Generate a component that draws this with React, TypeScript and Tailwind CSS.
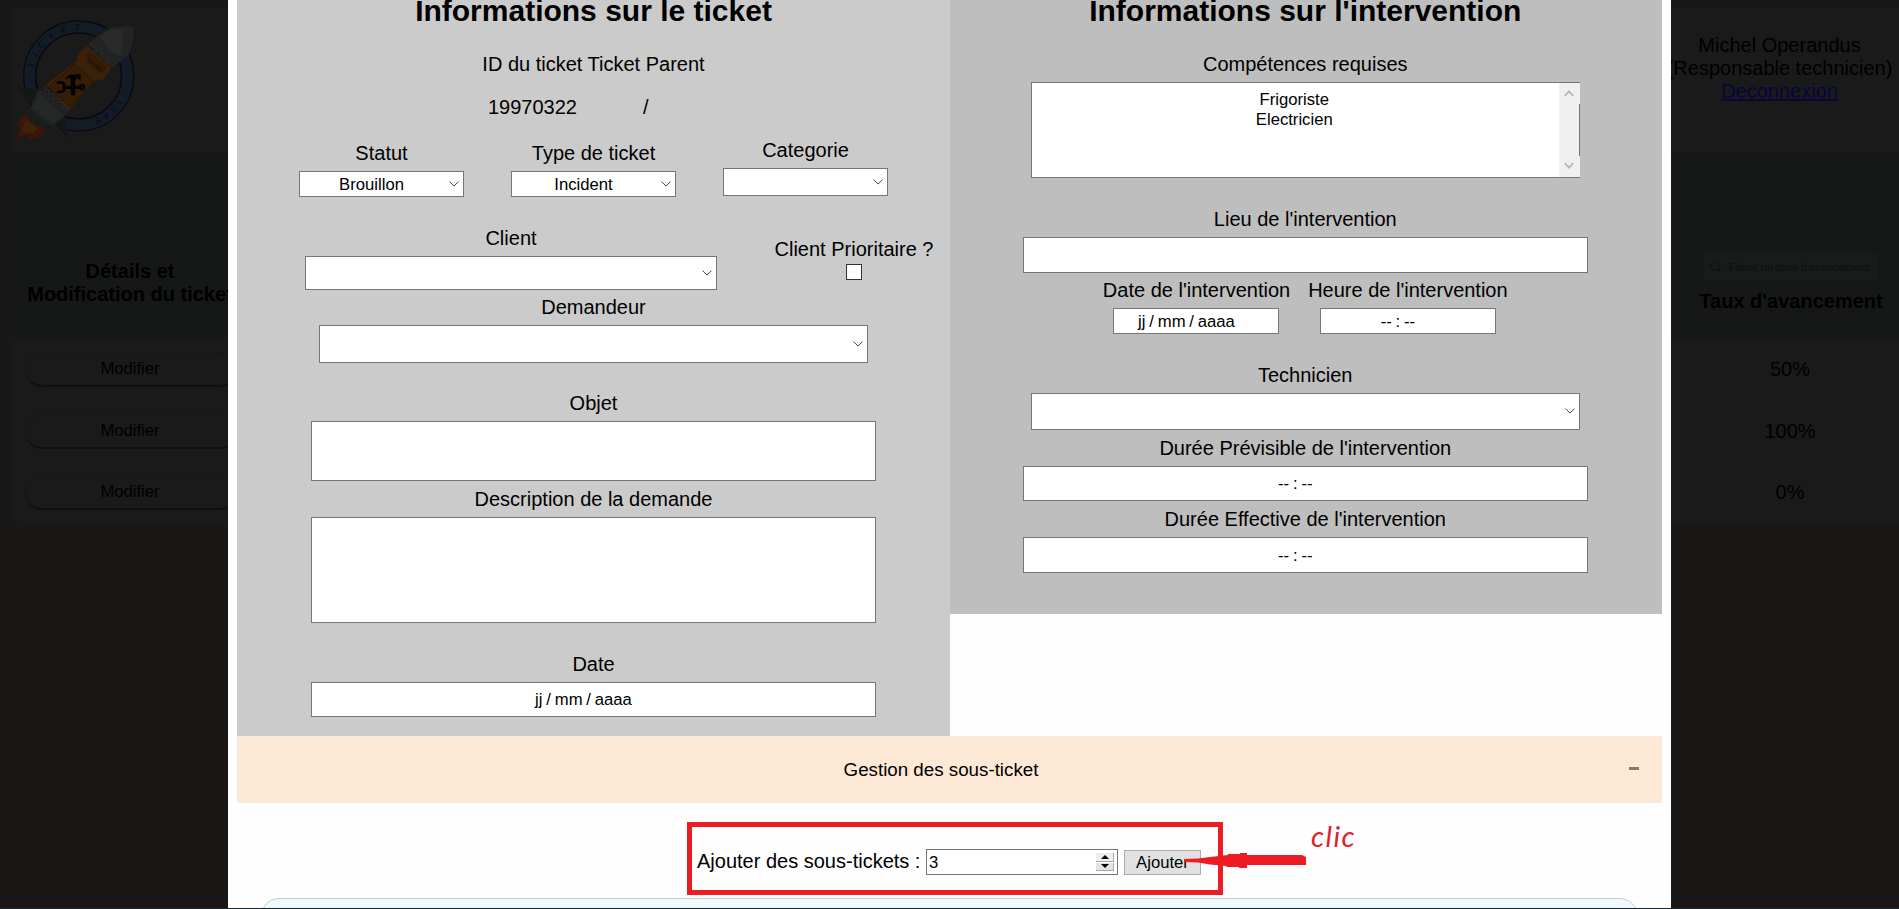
import type { ReactNode } from "react";

function Chevron({ className = "" }: { className?: string }) {
  return (
    <svg viewBox="0 0 10 6" className={"h-[6px] w-[10px] shrink-0 " + className} fill="none" stroke="#444" strokeWidth="1">
      <path d="M0.5 0.6 L5 5.1 L9.5 0.6" />
    </svg>
  );
}

function Label({ children, className = "" }: { children: ReactNode; className?: string }) {
  return <div className={"h-[23px] text-center text-[20px] leading-[23px] whitespace-nowrap " + className}>{children}</div>;
}

function Select({ value = "", className = "" }: { value?: string; className?: string }) {
  return (
    <div className={"mt-[6px] flex items-center border border-[#767676] bg-white pr-[4px] text-[16.667px] " + className}>
      <span className="flex-1 pl-[1px] pr-[7px] text-center">{value}</span>
      <Chevron className="mb-px" />
    </div>
  );
}

function Field({ value = "", className = "" }: { value?: string; className?: string }) {
  return (
    <div className={"mt-[6px] flex items-center justify-center border border-[#767676] bg-white pr-[20px] text-[16.667px] [word-spacing:-0.8px] " + className}>
      {value}
    </div>
  );
}

function Logo() {
  return (
    <svg viewBox="0 0 720 450" className="absolute left-0 top-0 h-[150px] w-[240px]">
      <circle cx="236" cy="228" r="147" fill="none" stroke="#131b27" strokeWidth="36" />
      <circle cx="236" cy="228" r="165" fill="none" stroke="#070a10" strokeWidth="4" />
      <circle cx="236" cy="228" r="129" fill="none" stroke="#070a10" strokeWidth="5" />
      <path id="arcTop" d="M99 228 A137 137 0 0 1 373 228" fill="none" />
      <path id="arcBottom" d="M236 384 A156 156 0 0 0 392 228" fill="none" />
      <g fill="#070a10" fontFamily="Liberation Sans" fontSize="27">
        <text letterSpacing="20"><textPath href="#arcTop" startOffset="22">TICKET</textPath></text>
        <text letterSpacing="14"><textPath href="#arcBottom" startOffset="56">SPEI</textPath></text>
      </g>
      <path d="M72 338 L60 356 L48 378 L60 380 L48 416 L78 404 L88 416 L122 412 L136 386 Z" fill="#381708" />
      <path d="M78 356 L64 396 L98 400 L112 386 Z" fill="#40210c" />
      <path d="M90 330 L142 370 L124 388 L82 354 Z" fill="#1b1c1c" />
      <path d="M48 262 L108 266 L142 278 L204 334 L190 354 L204 420 L160 380 L142 372 L90 330 L96 312 Z" fill="#202121" />
      <path d="M118 284 L190 344 L162 372 L94 324 Z" fill="#262727" />
      <path d="M48 262 L114 268 L94 312 Z M194 352 L204 420 L162 376 Z" fill="#151616" />
      <path d="M138 254 L230 182 L234 160 L262 138 L334 204 L310 238 L286 242 L206 332 Z" fill="#3b2107" />
      <path d="M146 262 L222 194 Q240 206 282 246 L210 320 Z" fill="#361d06" stroke="#241304" strokeWidth="3" />
      <path d="M256 166 L272 154 L322 200 L306 218 Z" fill="#321b06" />
      <text x="256" y="182" fill="#170d05" fontFamily="Liberation Sans" fontWeight="bold" fontSize="16" transform="rotate(41 256 182)">TICKET</text>
      <path d="M262 138 L288 112 L330 84 Q378 72 402 84 Q404 122 386 166 L352 192 L334 204 L328 188 L316 188 L312 174 L300 172 L296 158 L284 158 L280 144 Z" fill="#222323" />
      <path d="M300 108 Q330 82 364 88 Q378 124 362 168 Q322 156 300 108 Z" fill="#2a2a2a" />
      <path d="M138 256 L134 270 L148 270 L146 284 L160 282 L160 296 L174 296 L174 308 L188 308 L188 322 L202 318 L204 334" fill="none" stroke="#292929" strokeWidth="4" />
      <path d="M268 128 L278 142 L288 142 L292 156 L304 158 L306 172 L320 174 L322 188 L334 196" fill="none" stroke="#292929" strokeWidth="4" />
      <g fill="none" stroke="#030303" strokeLinecap="round">
        <path d="M192 262 H242" strokeWidth="10" />
        <path d="M219 244 V280" strokeWidth="14" />
        <path d="M174 248 Q196 244 192 261 Q196 278 174 276" strokeWidth="8" />
        <path d="M239 262 a7 7 0 1 0 14 0 a7 7 0 1 0 -14 0" strokeWidth="6" />
      </g>
      <path d="M194 240 Q202 220 220 224 L242 222 L242 242 L232 234 L224 242 L214 242 L208 232 Z" fill="#030303" />
    </svg>
  );
}

function EditButton() {
  return (
    <div className="h-[35px] w-[212px] rounded-[17px] border border-b-2 border-[#171717] border-b-[#101010] pr-0.5 text-center text-[16.667px] leading-[31px]">
      Modifier
    </div>
  );
}

function Backdrop() {
  return (
    <div className="flex h-[909px] w-[1899px] justify-between bg-[#1a1816] pt-[8px] pl-[11px] text-black">
      <div className="w-[240px]">
        <div className="h-[144px] bg-[#1a1a1a]" />
        <div className="h-[186px] bg-[#151816] pt-[108px] pr-[2px] text-center text-[20px] leading-[23px] font-bold whitespace-nowrap">
          Détails et
          <br />
          Modification du ticket
        </div>
        <div className="flex h-[185px] flex-col gap-[26.5px] rounded-bl-[14px] bg-[#1a1a1a] pt-[14px] pl-[14px]">
          <EditButton />
          <EditButton />
          <EditButton />
        </div>
      </div>
      <div className="w-[240px]">
        <div className="flex h-[144px] flex-col items-center bg-[#1a1a1a] pt-[26px] pl-[1px] text-[20px] leading-[23px] whitespace-nowrap">
          <span>Michel Operandus</span>
          <span>(Responsable technicien)</span>
          <span className="text-[#06063a] underline">Deconnexion</span>
        </div>
        <div className="h-[186px] bg-[#151816] pt-[101px] pl-[44px]">
          <div className="flex h-[28px] w-[175px] items-center bg-[#191b1a] pl-[7px] text-[11.2px] whitespace-nowrap text-[#0d0f0e]">
            <svg viewBox="0 0 12 12" className="mr-[7px] h-[12px] w-[12px]" fill="none" stroke="#101211" strokeWidth="1.4">
              <circle cx="5" cy="5" r="4" />
              <path d="M8 8 L11.5 11.5" />
            </svg>
            Filtrer un taux d'avancement
          </div>
          <div className="mt-[9px] w-[176px] text-center text-[20px] leading-[23px] font-bold whitespace-nowrap">
            <span className="-mx-[5px]">Taux d'avancement</span>
          </div>
        </div>
        <div className="flex h-[185px] flex-col gap-[38.5px] bg-[#1a1a1a] pt-[20px] pl-[22px] text-center text-[20px] leading-[23px]">
          <span>50%</span>
          <span>100%</span>
          <span>0%</span>
        </div>
      </div>
    </div>
  );
}

function TicketPanel() {
  return (
    <section className="h-[736px] w-[713px] bg-[#cbcbcb]">
      <h2 className="-mt-[6px] h-[34px] text-center text-[30px] leading-[34px] font-bold">Informations sur le ticket</h2>
      <Label className="mt-[25px]">ID du ticket Ticket Parent</Label>
      <div className="mt-[20px] flex h-[23px] gap-[66px] pl-[251px] text-[20px] leading-[23px]">
        <span>19970322</span>
        <span>/</span>
      </div>
      <div className="mt-[20px] flex gap-[47px] pl-[62px]">
        <div className="w-[165px] pt-[3px]">
          <Label>Statut</Label>
          <Select value="Brouillon" className="h-[26px]" />
        </div>
        <div className="w-[165px] pt-[3px]">
          <Label>Type de ticket</Label>
          <Select value="Incident" className="h-[26px]" />
        </div>
        <div className="w-[165px]">
          <Label>Categorie</Label>
          <Select className="h-[28px]" />
        </div>
      </div>
      <div className="mt-[30px] flex gap-[58px] pl-[68px]">
        <div className="w-[412px]">
          <Label>Client</Label>
          <Select className="h-[34px]" />
        </div>
        <div className="flex w-[158px] flex-col items-center pt-[11px]">
          <Label>Client Prioritaire ?</Label>
          <div className="mt-[3px] h-[16px] w-[16px] border border-[#333] bg-white" />
        </div>
      </div>
      <Label className="mt-[6px]">Demandeur</Label>
      <Select className="mx-auto h-[38px] w-[549px]" />
      <Label className="mt-[29px]">Objet</Label>
      <Field className="mx-auto h-[60px] w-[565px]" />
      <Label className="mt-[7px]">Description de la demande</Label>
      <Field className="mx-auto h-[106px] w-[565px]" />
      <Label className="mt-[30px]">Date</Label>
      <Field value="jj / mm / aaaa" className="mx-auto h-[35px] w-[565px]" />
    </section>
  );
}

function InterventionPanel() {
  return (
    <section className="h-[614px] w-[712px] bg-[#bebebe] pr-[1.5px]">
      <h2 className="-mt-[6px] h-[34px] text-center text-[30px] leading-[34px] font-bold">Informations sur l'intervention</h2>
      <Label className="mt-[25px]">Compétences requises</Label>
      <div className="mx-auto mt-[6px] flex h-[96px] w-[549px] border border-[#767676] bg-white text-[16.667px]">
        <div className="flex-1 pt-[7px] pr-[2px] text-center leading-[20px]">
          <div>Frigoriste</div>
          <div>Electricien</div>
        </div>
        <div className="-mr-px flex w-[21px] flex-col justify-between">
          <div className="flex h-[21px] items-center justify-center bg-[#f0f0f0]">
            <svg viewBox="0 0 10 7" className="h-[7px] w-[10px]" fill="none" stroke="#b4b4b4" strokeWidth="1.8">
              <path d="M0.8 6 L5 1.4 L9.2 6" />
            </svg>
          </div>
          <div className="mr-px flex-1 bg-[#f0f0f0]" />
          <div className="flex h-[21px] items-center justify-center bg-[#f0f0f0]">
            <svg viewBox="0 0 10 7" className="mb-[2px] h-[7px] w-[10px]" fill="none" stroke="#b4b4b4" strokeWidth="1.8">
              <path d="M0.8 1 L5 5.6 L9.2 1" />
            </svg>
          </div>
        </div>
      </div>
      <Label className="mt-[30px]">Lieu de l'intervention</Label>
      <Field className="mx-auto h-[36px] w-[565px]" />
      <div className="mt-[6px] flex justify-center gap-[18px]">
        <div>
          <Label>Date de l'intervention</Label>
          <Field value="jj / mm / aaaa" className="mx-auto h-[26px] w-[166px]" />
        </div>
        <div>
          <Label>Heure de l'intervention</Label>
          <Field value="-- : --" className="mx-auto h-[26px] w-[176px]" />
        </div>
      </div>
      <Label className="mt-[30px]">Technicien</Label>
      <Select className="mx-auto h-[37px] w-[549px]" />
      <Label className="mt-[7px]">Durée Prévisible de l'intervention</Label>
      <Field value="-- : --" className="mx-auto h-[35px] w-[565px]" />
      <Label className="mt-[7px]">Durée Effective de l'intervention</Label>
      <Field value="-- : --" className="mx-auto h-[36px] w-[565px]" />
    </section>
  );
}

function SubTickets() {
  return (
    <>
      <div className="flex h-[67px] items-center bg-[#fee9d7] pr-[23px]">
        <span className="flex-1 pt-px pl-[16px] text-center text-[18.75px]">Gestion des sous-ticket</span>
        <span className="mb-[2px] h-[3px] w-[10px] bg-[#8a7a6e]" />
      </div>
      <div className="mt-[19px] ml-[450px] flex h-[73px] w-[536px] items-center border-[5px] border-[#ea1c24] pl-[5px]">
        <span className="w-[229px] pt-[5px] text-[20px] leading-[23px] whitespace-nowrap">Ajouter des sous-tickets :</span>
        <div className="mt-[7px] flex h-[26px] w-[192px] items-center border border-[#767676] bg-white pr-[3px] pl-[2px] text-[16.667px]">
          <span className="flex-1">3</span>
          <span className="flex h-[18px] w-[18px] flex-col gap-px">
            <span className="flex flex-1 items-center justify-center border-r border-b border-[#a8a8a8] bg-[#eee]">
              <svg viewBox="0 0 8 4" className="h-[4px] w-[8px]"><path d="M0 4 L4 0 L8 4 Z" /></svg>
            </span>
            <span className="flex flex-1 items-center justify-center border-r border-b border-[#a8a8a8] bg-[#e4e4e4]">
              <svg viewBox="0 0 8 4" className="h-[4px] w-[8px]"><path d="M0 0 L4 4 L8 0 Z" /></svg>
            </span>
          </span>
        </div>
        <div className="mt-[7px] ml-[6px] flex h-[25px] w-[77px] items-center justify-center border border-[#adadad] bg-[#e1e1e1] text-[16.667px]">
          Ajouter
        </div>
      </div>
      <div className="mt-[3px] ml-[24px] h-[60px] w-[1377px] rounded-[18px] border border-[#c6cdd1] bg-[#effafe]" />
    </>
  );
}

export default function App() {
  return (
    <div className="relative h-[909px] w-[1899px] overflow-hidden font-['Liberation_Sans',Arial,sans-serif] text-black">
      <Backdrop />
      <Logo />
      <div className="absolute top-0 left-[228px] h-[909px] w-[1443px] overflow-hidden bg-[#fefefe] pr-[9px] pl-[9px]">
        <div className="flex items-start">
          <TicketPanel />
          <InterventionPanel />
        </div>
        <SubTickets />
      </div>
      <svg viewBox="0 0 130 20" className="absolute top-[850px] left-[1180px] h-[20px] w-[130px]" fill="#ed1c24">
        <path d="M4 9 L18 8.5 L30 7 L48 5 L48 4 L60 4 L60 3 L67 3 L67 5 L122 5 L126 7 L126 15 L67 15 L67 18 L59 18 L59 17 L47 17 L46 16 L30 14.5 L18 12.5 L4 12 Z" />
      </svg>
      <span className="absolute top-[819px] left-[1311px] font-[Lato] text-[29px] leading-[34px] tracking-[1.4px] text-[#dc2430] italic">clic</span>
      <div className="absolute top-[908px] left-0 h-px w-full bg-[#1b2530]" />
    </div>
  );
}
